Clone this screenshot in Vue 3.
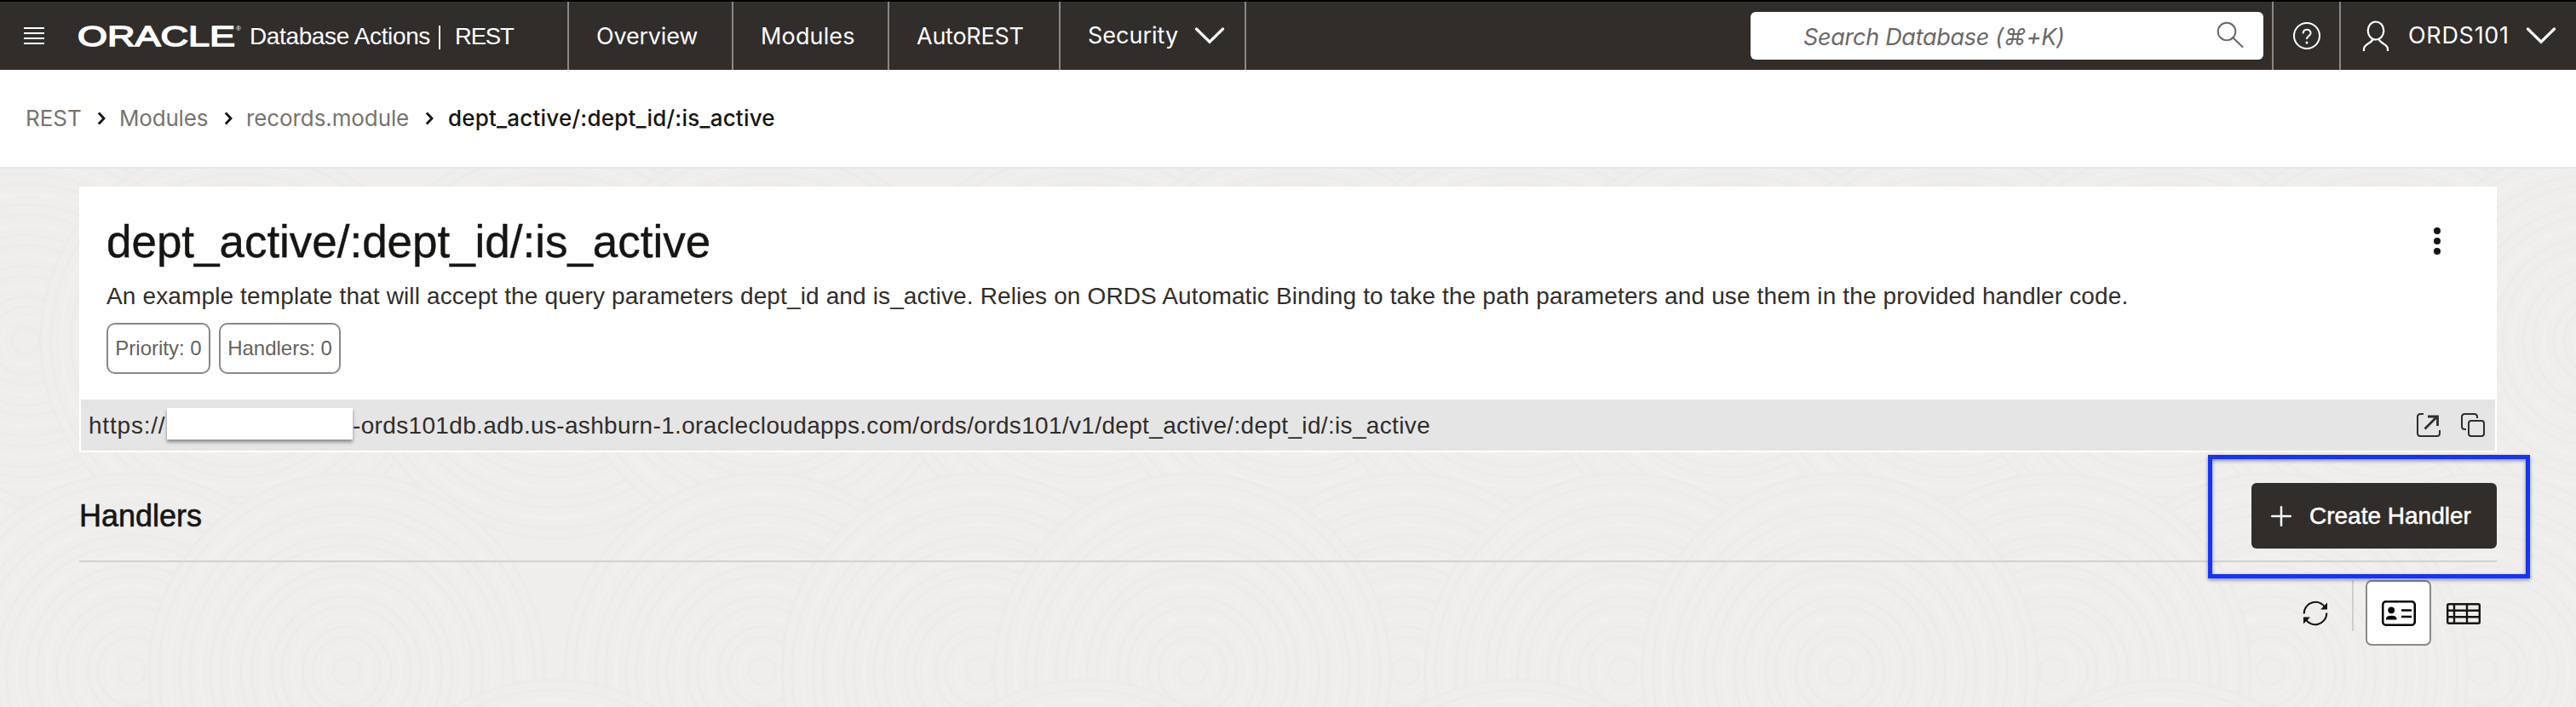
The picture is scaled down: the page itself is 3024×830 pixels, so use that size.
<script setup>
const navItems = [
  { label: 'Overview', cls: 'overview' },
  { label: 'Modules', cls: 'modules' },
  { label: 'AutoREST', cls: 'autorest' },
  { label: 'Security', cls: 'security', menu: true },
]

const crumbs = [
  { label: 'REST', cls: 'c-rest' },
  { label: 'Modules', cls: 'c-modules' },
  { label: 'records.module', cls: 'c-records' },
  { label: 'dept_active/:dept_id/:is_active', cls: 'c-current' },
]

// Tree-ring texture behind the page content
const centers = [
  ...[30, 280, 650, 900, 1270, 1520, 1780, 2030, 2290, 2540, 2800, 3050].map((x) => [x, 400]),
  ...[-90, 895, 1650, 2915, 1150, 1400, 1905, 2665, 2410, 2160, 155, 407].map((x) => [x, 788]),
  ...[650, 1275, 1780, 2540].map((x) => [x, 1030]),
]
const radii = []
for (let r = 232; r > 10; r -= 12) radii.push(r)
</script>

<template>
  <div class="page">
    <header class="topbar">
      <div class="brand">
        <svg class="burger" width="24" height="20" viewBox="0 0 24 20">
          <path d="M0 1H24M0 7H24M0 13H24M0 19H24" stroke="#fff" stroke-width="2" />
        </svg>
        <svg class="logo" width="202" height="46" viewBox="-4 -8 202 46">
          <text class="wordmark" x="0" y="26.600" textLength="185" lengthAdjust="spacingAndGlyphs">ORACLE</text>
          <text class="reg" x="186" y="9">®</text>
        </svg>
        <span class="product">Database Actions</span>
        <span class="bar"></span>
        <span class="area">REST</span>
      </div>
      <nav class="nav">
        <a v-for="n in navItems" :key="n.label" class="nav-item" :class="n.cls">
          <span>{{ n.label }}</span>
          <svg v-if="n.menu" class="caret" width="36" height="20" viewBox="0 0 36 20">
            <path d="M2.500 2L18 17.200L33.500 2" fill="none" stroke="#fff" stroke-width="3.200" stroke-linecap="round" />
          </svg>
        </a>
      </nav>
      <div class="search">
        <span>Search Database (⌘+K)</span>
        <svg width="32" height="32" viewBox="0 0 32 32" fill="none" stroke="#6a6866" stroke-width="2">
          <circle cx="12" cy="12" r="10.300" />
          <path d="M19.300 19.300L30.500 30" stroke-linecap="round" />
        </svg>
      </div>
      <div class="help">
        <svg width="34" height="34" viewBox="0 0 34 34" fill="none" stroke="#fff" stroke-width="2">
          <circle cx="17" cy="17" r="15" />
          <path d="M12.600 14.500C12.600 8.300 21.600 8.400 21.600 13.700C21.600 17 17 17 17 21" />
          <circle cx="17" cy="25" r="1.500" fill="#fff" stroke="none" />
        </svg>
      </div>
      <div class="user">
        <svg class="person" width="32" height="36" viewBox="0 0 32 36" fill="none" stroke="#fff" stroke-width="2.200">
          <ellipse cx="16" cy="12" rx="9.300" ry="10.500" />
          <path d="M2 36V33.500C2 27.500 10.500 27.500 12.500 22M30 36V33.500C30 27.500 21.500 27.500 19.500 22" />
        </svg>
        <span>ORDS101</span>
        <svg class="caret" width="36" height="20" viewBox="0 0 36 20">
          <path d="M2.500 2L18 17.200L33.500 2" fill="none" stroke="#fff" stroke-width="3.200" stroke-linecap="round" />
        </svg>
      </div>
    </header>

    <div class="crumbs">
      <template v-for="(c, i) in crumbs" :key="c.label">
        <svg v-if="i" class="sep" width="10" height="16" viewBox="0 0 10 16">
          <path d="M1.800 1.500L8 8L1.800 14.500" fill="none" stroke="#161513" stroke-width="2.800" />
        </svg>
        <span class="crumb" :class="c.cls">{{ c.label }}</span>
      </template>
    </div>

    <main class="body">
      <svg class="texture" width="3024" height="632" viewBox="0 198 3024 632">
        <g v-for="(c, i) in centers" :key="i" :transform="`translate(${c[0]} ${c[1]})`">
          <circle v-for="(r, j) in radii" :key="r" :r="r" :class="j % 3 === 2 ? 'ring faint' : 'ring'" />
        </g>
      </svg>

      <section class="card">
        <div class="card-main">
          <div class="info">
            <h1>dept_active/:dept_id/:is_active</h1>
            <p>An example template that will accept the query parameters dept_id and is_active. Relies on ORDS Automatic Binding to take the path parameters and use them in the provided handler code.</p>
            <div class="chips">
              <span class="chip first">Priority: 0</span>
              <span class="chip second">Handlers: 0</span>
            </div>
          </div>
          <svg class="dots" width="8" height="32" viewBox="0 0 8 32" fill="#161513">
            <circle cx="4" cy="4" r="4" /><circle cx="4" cy="16" r="4" /><circle cx="4" cy="28" r="4" />
          </svg>
        </div>
        <div class="url">
          <span class="scheme">https://</span>
          <span class="redacted"></span>
          <span class="path">-ords101db.adb.us-ashburn-1.oraclecloudapps.com/ords/ords101/v1/dept_active/:dept_id/:is_active</span>
          <svg class="open" width="28" height="28" viewBox="0 0 28 28" fill="none" stroke="#312d2a" stroke-width="2">
            <path d="M8 1H4.500Q1 1 1 4.500V23.500Q1 27 4.500 27H23.500Q27 27 27 23.500V20" />
            <path d="M9.500 18.500L24 4M13 4H24.500V15" stroke-width="2.800" />
          </svg>
          <svg width="28" height="28" viewBox="0 0 28 28" fill="none" stroke="#312d2a" stroke-width="2">
            <rect x="9" y="9" width="18" height="18" rx="3" />
            <path d="M6 19H4.500Q1 19 1 15.500V4.500Q1 1 4.500 1H15.500Q19 1 19 4.500V6" />
          </svg>
        </div>
      </section>

      <section class="handlers">
        <h2>Handlers</h2>
        <div class="create-wrap">
          <button class="create">
            <svg width="24" height="24" viewBox="0 0 24 24">
              <path d="M1.200 12H22.800M12 1.200V22.800" stroke="#fff" stroke-width="2.500" stroke-linecap="round" />
            </svg>
            <span>Create Handler</span>
          </button>
          <div class="highlight"></div>
        </div>
      </section>

      <div class="tools">
        <svg class="refresh" width="30" height="30" viewBox="0 0 30 30" fill="none" stroke="#161513" stroke-width="2">
          <path d="M1.700 15.500C1.700 1.500 20 -3.500 26.500 8.500M28.300 14.500C28.300 28.500 10 33.500 3.500 21.500" />
          <path d="M29 2.500V10.500H21ZM1 27.500V19.500H9Z" fill="#161513" stroke="none" />
        </svg>
        <span class="divider"></span>
        <span class="view active">
          <svg width="40" height="30" viewBox="0 0 40 30">
            <rect x="1.250" y="1.250" width="37.500" height="27.500" rx="3.500" fill="none" stroke="#000" stroke-width="2.500" />
            <circle cx="11.200" cy="11.300" r="3.900" />
            <path d="M5 22.500V21.500Q5 17.800 11.300 17.800T17.500 21.500V22.500Z" />
            <path d="M23 11.500H35M23 19H35" stroke="#000" stroke-width="2.400" />
          </svg>
        </span>
        <svg class="grid" width="40" height="25" viewBox="0 0 40 25" fill="none" stroke="#161513" stroke-width="2.400">
          <rect x="1.200" y="1.200" width="37.600" height="22.600" rx="1.500" />
          <path d="M1 8.800H39M1 16.300H39M9 1V24M24 1V24" />
        </svg>
      </div>
    </main>
  </div>
</template>

<style>
html, body { margin: 0; overflow: hidden; }
</style>

<style scoped>
.page { width: 3024px; height: 830px; overflow: hidden; background: #fff; font-family: "Liberation Sans", Arial, sans-serif; color: #312d2a; font-size: 28px; white-space: nowrap; display: flex; flex-direction: column; }
svg { display: block; flex: none; }

.topbar { height: 80px; flex: none; border-top: 2px solid #000; background: #312d2a; color: #fff; display: flex; align-items: center; line-height: 80px; }
.brand { box-sizing: border-box; width: 668px; height: 80px; border-right: 2px solid #8b8784; display: flex; align-items: center; padding-left: 28px; }
.logo { margin-left: 35px; margin-top: -1px; }
.wordmark { font: 400 34px "Liberation Sans", Arial, sans-serif; fill: #fff; stroke: #fff; stroke-width: 1.500; }
.reg { font: 8px "Liberation Sans", Arial, sans-serif; fill: #fff; }
.product { margin-left: 4px; width: 222px; letter-spacing: -.37px; padding-top: 1px; }
.bar { width: 2px; height: 28px; background: #fff; margin-top: 4px; }
.area { margin-left: 17px; font-size: 27.500px; letter-spacing: -1.200px; padding-top: 1px; }
.nav { display: flex; font-family: Inter, sans-serif; font-size: 27px; }
.nav-item { box-sizing: border-box; height: 80px; border-right: 2px solid #8b8784; padding-left: 32px; display: flex; align-items: center; }
.nav-item span { padding-top: 2px; }
.overview { width: 193px; letter-spacing: -.2px; }
.modules { width: 183px; letter-spacing: .15px; }
.autorest { width: 201px; letter-spacing: -.25px; }
.security { width: 218px; }
.security span { padding-top: 0; }
.security .caret { margin-left: 19px; }
.search { box-sizing: border-box; width: 602px; height: 56px; margin-left: auto; background: #fff; border-radius: 6px; color: #6a6866; font: italic 27px/56px Inter, sans-serif; letter-spacing: -.28px; display: flex; align-items: center; justify-content: space-between; padding: 0 23px 0 62px; }
.search span { padding-top: 3px; line-height: 53px; }
.search svg { margin-top: -2px; }
.help { box-sizing: border-box; width: 81px; height: 80px; margin-left: 10px; border: solid #8b8784; border-width: 0 2px; display: flex; align-items: center; justify-content: center; }
.user { box-sizing: border-box; width: 276px; height: 80px; display: flex; align-items: center; padding-left: 25px; font-family: Inter, sans-serif; font-size: 27px; letter-spacing: .7px; }
.person { margin-right: 22px; }
.user .caret { margin-left: 19px; }

.crumbs { box-sizing: border-box; height: 116px; flex: none; border-bottom: 2px solid #e6e6e5; padding: 0 0 0 30px; display: flex; align-items: center; font: 26px/114px Inter, sans-serif; color: #76736f; }
.c-rest { width: 84px; }
.c-modules { width: 123px; letter-spacing: -.2px; margin-left: 16px; }
.c-records { width: 210px; letter-spacing: -.1px; margin-left: 16px; }
.c-current { margin-left: 17px; color: #161513; font-weight: 500; letter-spacing: .21px; }

.body { position: relative; flex: 1; background: #efeeec; padding: 21px 93px 0; }
.texture { position: absolute; left: 0; top: 0; }
.ring { fill: #efeeec; stroke: #ecebe9; stroke-width: 3.500; }
.faint { stroke: #f1f0ee; }

.card { position: relative; box-sizing: border-box; height: 312px; background: #fff; border: 2px solid #fff; }
.card-main { height: 248px; display: flex; justify-content: space-between; padding: 0 64px 0 30px; }
.info { padding-top: 33px; }
h1 { margin: 0; font-weight: 400; font-size: 53px; line-height: 60px; letter-spacing: -.03px; color: #161513; -webkit-text-stroke: .4px #161513; }
p { margin: 14px 0 11px; line-height: 40px; letter-spacing: .134px; }
.chips { display: flex; gap: 10px; }
.chip { box-sizing: border-box; height: 60px; border: 2px solid #8b8885; border-radius: 10px; font-size: 24px; line-height: 56px; color: #65615d; text-align: center; }
.first { width: 122px; }
.second { width: 143px; }
.dots { margin-top: 46px; }
.url { height: 60px; background: #e5e5e5; display: flex; align-items: center; padding: 0 12px 0 9px; }
.scheme { width: 92px; letter-spacing: .8px; padding-top: 1px; }
.redacted { width: 218px; height: 37px; background: #fff; box-shadow: 0 3px 4px rgba(0, 0, 0, .4); margin-top: -3px; }
.path { letter-spacing: .34px; padding-top: 1px; }
.open { margin-left: auto; margin-right: 24px; }

.handlers { position: relative; box-sizing: border-box; height: 129px; border-bottom: 2px solid #d2d1cf; display: flex; justify-content: space-between; padding-top: 36px; }
h2 { margin: 0; font-weight: 400; font-size: 36px; line-height: 77px; color: #161513; -webkit-text-stroke: .6px #161513; }
.create-wrap { position: relative; width: 288px; height: 77px; }
.create { box-sizing: border-box; width: 288px; height: 77px; border: 0; border-radius: 6px; background: #312d2a; color: #fff; font: 28px "Liberation Sans", Arial, sans-serif; -webkit-text-stroke: .5px #fff; padding: 0 0 0 23px; display: flex; align-items: center; gap: 21px; }
.highlight { position: absolute; box-sizing: border-box; left: -51px; top: -33px; width: 378px; height: 145px; border: 5px solid #1433ff; filter: drop-shadow(0 2px 2px rgba(0, 0, 0, .4)); z-index: 2; }

.tools { position: relative; height: 77px; margin-top: 21px; display: flex; align-items: center; justify-content: flex-end; padding-right: 19px; }
.divider { width: 2px; height: 60px; background: #cfcecc; align-self: flex-start; margin: 0 14px 0 28px; }
.view { box-sizing: border-box; width: 77px; height: 77px; display: flex; align-items: center; justify-content: center; }
.active { background: #fff; border: 2px solid #8b8885; border-radius: 7px; }
.grid { margin-left: 18px; margin-top: 2px; }
</style>
